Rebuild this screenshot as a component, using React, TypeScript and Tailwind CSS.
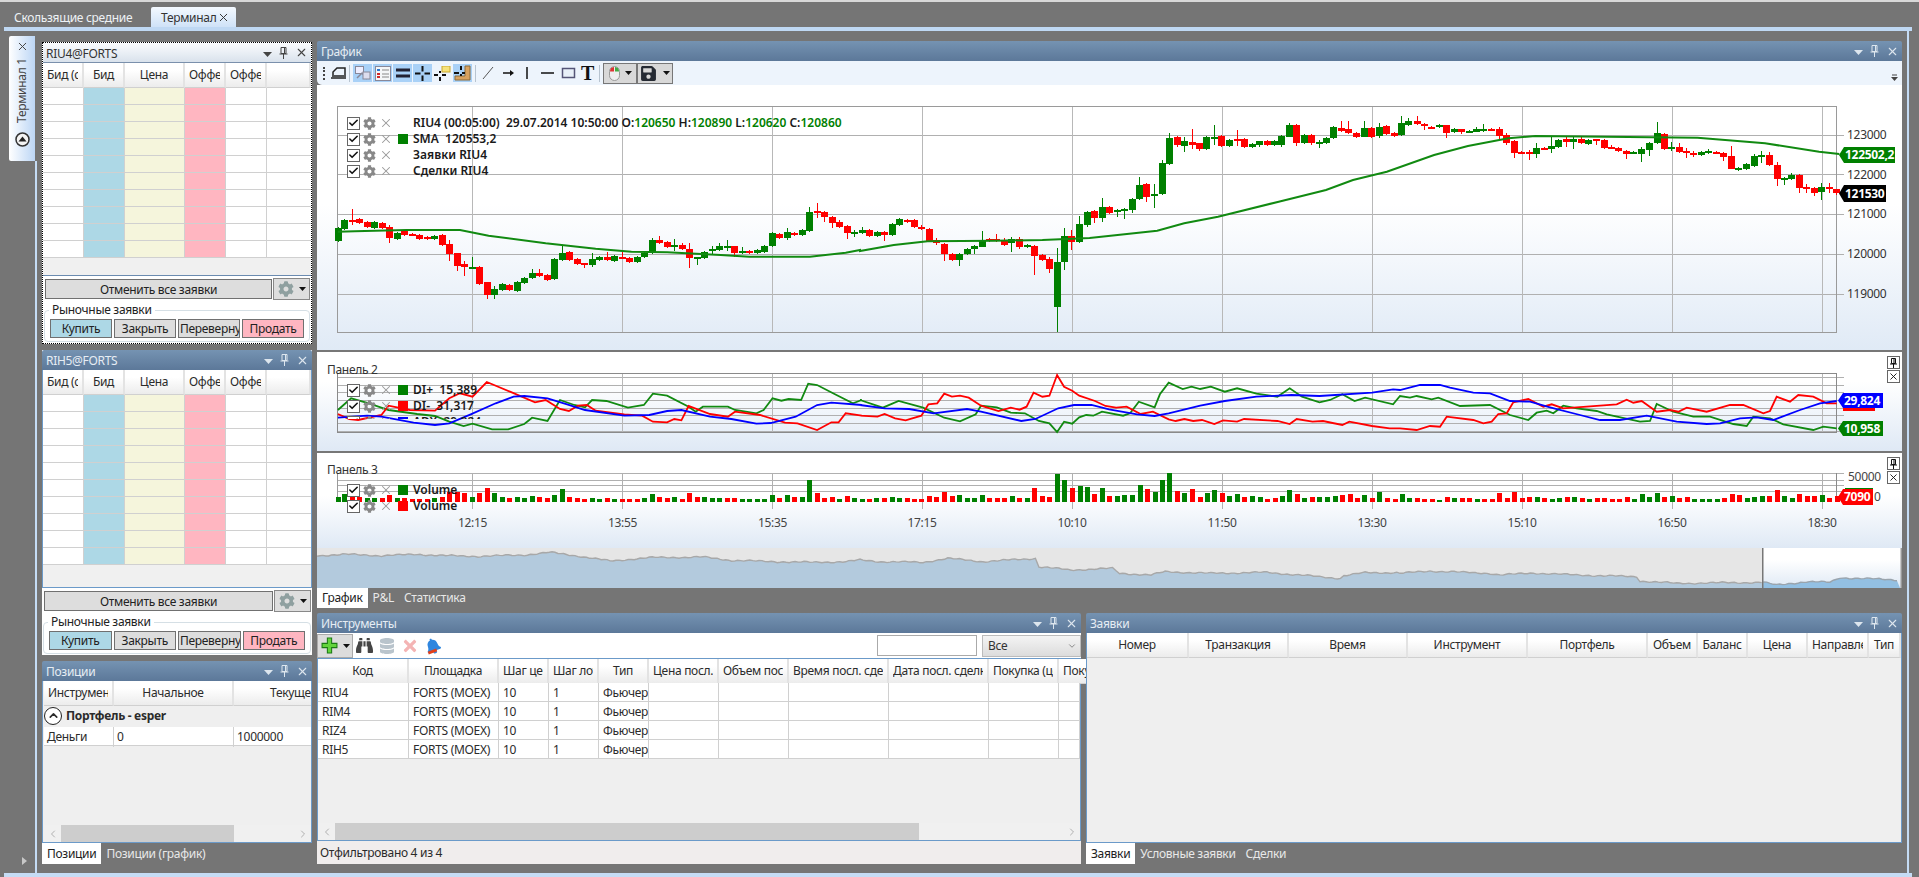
import type { ReactNode } from "react";
import { Check, ChevronLeft, ChevronRight, ChevronDown, ChevronUp, X } from "lucide-react";
import { FaBell, FaBinoculars, FaCog, FaDatabase, FaSave, FaTimes } from "react-icons/fa";

const GREEN = "#008000";
const RED = "#ff0000";
const BLUE = "#0000ff";

type Candle = [number, number, number, "g" | "r", number?, number?];
type Pt = [number, number];

// candles read off the reference: [x, bodyTop, bodyBottom, colour, wickTop, wickBottom]
const candlesLeft: Candle[] = [
  [78, 595, 632, "g"], [96, 570, 597, "g"], [118, 570, 572, "r", 537, 585], [138, 568, 580, "r"], [160, 576, 592, "r"],
  [180, 577, 594, "g"], [202, 580, 595, "r"], [222, 592, 623, "r", 585, 638], [244, 610, 627, "g"], [264, 602, 615, "r"],
  [286, 612, 614, "r"], [306, 616, 627, "r"], [328, 622, 626, "r"], [348, 618, 626, "g"], [370, 615, 645, "r"],
  [390, 642, 671, "r", 630, 692], [412, 670, 708, "r", 668, 722], [432, 702, 712, "r", 693, 738], [454, 712, 716, "g", 680, 718], [474, 711, 762, "r"],
  [496, 757, 795, "r", 755, 806], [516, 778, 795, "g", 768, 806], [538, 762, 780, "g"], [558, 765, 780, "r"], [580, 757, 782, "g"],
  [600, 745, 758, "g"], [622, 730, 744, "g", 716, 746], [642, 730, 738, "r", 716, 740], [664, 736, 750, "r"], [684, 688, 747, "g"],
  [706, 670, 690, "g", 647, 692], [726, 666, 690, "r"], [748, 688, 702, "r"], [768, 700, 702, "r", 700, 715], [790, 688, 705, "g", 670, 712],
  [810, 682, 690, "g"], [832, 682, 690, "r", 666, 692], [852, 679, 692, "g"], [874, 680, 686, "r", 666, 688], [894, 685, 696, "r"],
  [916, 680, 695, "g"], [936, 668, 680, "g"], [958, 630, 668, "g", 625, 672], [978, 630, 638, "r", 618, 642], [1000, 636, 650, "r"],
  [1020, 646, 651, "g", 628, 662], [1042, 646, 656, "r", 640, 660], [1062, 656, 683, "r", 640, 713], [1084, 681, 683, "g", 680, 705], [1104, 665, 683, "g"],
  [1126, 656, 662, "g", 648, 675], [1146, 648, 660, "g", 638, 664], [1168, 648, 650, "g", 630, 662], [1188, 649, 668, "r", 648, 682], [1210, 663, 668, "g", 652, 672],
  [1230, 663, 668, "r"], [1252, 661, 668, "g"], [1272, 647, 665, "g"], [1294, 610, 648, "g"], [1314, 613, 624, "r"],
  [1336, 607, 624, "g", 594, 630], [1356, 608, 616, "r"], [1378, 600, 615, "g"], [1398, 546, 603, "g", 532, 605], [1420, 544, 548, "r", 519, 563],
  [1440, 546, 562, "r", 544, 575], [1462, 562, 578, "r", 558, 594], [1482, 575, 590, "r", 570, 593], [1504, 588, 608, "r", 586, 627], [1524, 606, 611, "g", 600, 620],
];

const candlesRight: Candle[] = [
  [3, 601, 608, "g", 590, 612], [14, 600, 618, "r"], [25, 607, 618, "g"], [36, 606, 615, "r", 604, 632], [47, 582, 615, "g"],
  [58, 567, 585, "g"], [69, 570, 575, "r"], [80, 570, 592, "r"], [91, 592, 598, "r", 584, 600], [102, 597, 634, "r"],
  [113, 630, 640, "r", 625, 645], [124, 642, 671, "r", 640, 692], [136, 671, 689, "r", 668, 692], [147, 671, 689, "g", 668, 708], [158, 657, 672, "g"],
  [169, 648, 658, "g", 645, 672], [180, 630, 650, "g", 603, 652], [191, 628, 632, "r"], [202, 628, 634, "r", 612, 636], [213, 630, 645, "r", 625, 648],
  [224, 628, 640, "g", 622, 665], [235, 628, 652, "r", 622, 658], [247, 645, 650, "g"], [258, 648, 678, "r", 645, 735], [269, 676, 690, "r"],
  [280, 686, 718, "r", 680, 728], [291, 697, 830, "g", 655, 907], [302, 619, 697, "g", 595, 720], [313, 619, 635, "r", 600, 660], [324, 582, 635, "g", 558, 638],
  [336, 545, 585, "g", 543, 590], [347, 543, 565, "r", 540, 580], [358, 532, 563, "g", 504, 575], [369, 532, 548, "r"], [380, 540, 544, "g", 538, 560],
  [391, 537, 541, "g", 535, 566], [402, 507, 540, "g", 505, 548], [413, 465, 508, "g", 442, 510], [424, 463, 500, "r", 460, 515], [436, 492, 497, "g", 462, 533],
  [447, 400, 492, "g", 390, 495], [458, 324, 402, "g", 310, 404], [469, 321, 345, "r", 318, 350], [480, 334, 348, "g", 322, 365], [491, 337, 344, "r", 297, 358],
  [502, 340, 358, "r", 338, 362], [513, 321, 356, "g"], [524, 321, 326, "g", 285, 345], [535, 318, 348, "r"], [547, 330, 348, "g", 326, 350],
  [558, 328, 333, "r", 300, 348], [569, 328, 350, "r"], [580, 343, 350, "g"], [591, 334, 345, "g", 332, 352], [602, 334, 345, "r"],
  [613, 334, 345, "g"], [624, 318, 345, "g", 316, 352], [635, 284, 320, "g", 278, 322], [646, 285, 340, "r", 283, 348], [657, 314, 340, "g"],
  [668, 316, 340, "r", 312, 346], [680, 335, 340, "g", 330, 355], [690, 323, 340, "g"], [701, 292, 325, "g", 288, 328], [712, 295, 302, "r", 273, 305],
  [723, 298, 310, "r", 273, 312], [735, 308, 320, "r"], [746, 295, 320, "g", 273, 322], [757, 295, 320, "r"], [768, 290, 318, "g", 278, 323],
  [779, 288, 312, "r"], [790, 308, 318, "r"], [801, 280, 316, "g", 258, 318], [812, 272, 284, "g", 265, 288], [824, 273, 282, "r", 258, 284],
  [835, 282, 288, "r", 278, 300], [846, 290, 293, "r"], [857, 286, 292, "g", 282, 294], [868, 286, 310, "r", 284, 323], [879, 298, 306, "g"],
  [890, 298, 305, "r", 296, 312], [901, 304, 306, "g"], [912, 298, 305, "g", 290, 307], [923, 297, 299, "g", 283, 306], [934, 296, 298, "r"],
  [946, 298, 318, "r", 292, 326], [957, 316, 340, "r", 310, 345], [968, 333, 368, "r", 331, 384], [979, 367, 369, "r"], [990, 367, 369, "r", 360, 390],
  [1001, 355, 372, "g", 338, 385], [1012, 354, 356, "r"], [1023, 348, 356, "g", 322, 370], [1034, 330, 350, "g"], [1045, 328, 335, "r", 322, 352],
  [1056, 326, 335, "g", 320, 356], [1067, 328, 340, "r", 322, 342], [1078, 330, 343, "g"], [1090, 328, 332, "r", 326, 345], [1101, 330, 354, "r"],
  [1112, 350, 356, "r", 346, 358], [1123, 354, 364, "r"], [1134, 363, 372, "r", 360, 386], [1145, 366, 370, "g"], [1157, 356, 372, "g", 352, 395],
  [1168, 338, 360, "g", 335, 378], [1180, 310, 340, "g", 276, 342], [1190, 313, 356, "r", 310, 360], [1201, 350, 356, "g", 335, 362], [1212, 352, 366, "r", 338, 368],
  [1223, 364, 366, "r", 355, 384], [1234, 368, 370, "r", 362, 380], [1245, 366, 375, "g", 362, 378], [1256, 362, 368, "g", 358, 372], [1267, 366, 370, "r"],
  [1278, 370, 380, "r", 366, 392], [1290, 378, 416, "r", 348, 418], [1300, 415, 418, "g", 412, 423], [1312, 402, 416, "g", 400, 420], [1323, 378, 408, "g", 372, 412],
  [1334, 374, 378, "g", 364, 398], [1346, 375, 405, "r", 365, 408], [1357, 405, 446, "r", 395, 467], [1368, 444, 450, "g", 440, 464], [1379, 434, 446, "g", 430, 450],
  [1390, 434, 474, "r", 432, 488], [1401, 472, 478, "r", 462, 490], [1412, 475, 488, "r", 472, 498], [1423, 472, 485, "g", 460, 510], [1434, 472, 478, "r", 460, 490],
  [1445, 478, 490, "r", 476, 494],
];

const smaLeft: Pt[] = [[78, 605], [125, 604], [270, 600], [420, 600], [500, 617], [660, 640], [800, 656], [900, 665], [1000, 667], [1150, 675], [1230, 680], [1400, 680], [1500, 668], [1540, 660]];
const smaRight: Pt[] = [[0, 663], [50, 645], [100, 634], [200, 632], [270, 630], [340, 624], [440, 602], [480, 580], [530, 560], [620, 515], [690, 480], [730, 450], [780, 425], [850, 375], [900, 348], [960, 325], [1000, 318], [1240, 323], [1340, 340], [1420, 365], [1450, 372]];

const diGreen = [
  [[78, 195], [115, 160], [165, 175], [220, 195], [300, 207], [350, 213], [390, 230], [430, 243], [455, 236], [510, 253], [555, 253], [600, 237], [622, 218], [665, 228], [700, 165], [740, 180], [770, 187], [790, 165], [830, 168], [890, 188], [935, 180], [960, 146], [1000, 152], [1060, 185], [1080, 200], [1100, 185], [1170, 185], [1190, 195], [1250, 205], [1270, 195], [1295, 160], [1320, 167], [1340, 162], [1375, 165], [1395, 116], [1420, 120], [1470, 148], [1520, 175], [1545, 165]],
  [[0, 165], [65, 188], [110, 168], [180, 188], [240, 218], [285, 229], [330, 208], [345, 182], [390, 187], [430, 203], [470, 205], [510, 228], [540, 235], [562, 261], [582, 230], [605, 236], [625, 217], [645, 210], [665, 212], [690, 200], [750, 212], [770, 205], [795, 170], [840, 187], [855, 148], [880, 113], [920, 132], [945, 125], [970, 132], [1000, 125], [1040, 140], [1075, 130], [1130, 146], [1190, 155], [1225, 130], [1260, 155], [1310, 172], [1340, 165], [1375, 148], [1410, 168], [1440, 158], [1520, 178]],
  [[0, 153], [30, 158], [50, 153], [95, 163], [115, 158], [180, 183], [270, 180], [330, 210], [385, 225], [410, 203], [440, 197], [460, 205], [490, 182], [530, 190], [590, 198], [620, 208], [720, 230], [750, 228], [770, 177], [820, 200], [880, 215], [930, 215], [1000, 237], [1040, 243], [1060, 215], [1110, 220], [1150, 238], [1240, 255], [1270, 245], [1310, 250]],
] as Pt[][];

const diRed = [
  [[78, 207], [110, 222], [135, 225], [200, 210], [220, 182], [280, 195], [350, 197], [390, 160], [420, 145], [455, 155], [495, 111], [560, 140], [630, 172], [660, 165], [700, 192], [725, 198], [750, 182], [775, 180], [800, 197], [880, 208], [930, 212], [960, 230], [1000, 232], [1020, 222], [1040, 226], [1060, 183], [1120, 207], [1170, 215], [1190, 200], [1260, 210], [1330, 233], [1365, 235], [1420, 255], [1460, 232], [1480, 232], [1500, 205], [1545, 212]],
  [[0, 212], [50, 215], [70, 207], [100, 220], [130, 226], [175, 212], [195, 178], [220, 175], [240, 146], [262, 155], [285, 152], [310, 158], [345, 182], [395, 198], [430, 188], [455, 194], [475, 185], [495, 143], [520, 155], [540, 152], [562, 90], [582, 125], [605, 137], [625, 152], [670, 168], [700, 183], [730, 188], [760, 185], [800, 207], [835, 200], [880, 223], [900, 228], [925, 222], [950, 228], [975, 225], [1010, 237], [1035, 226], [1075, 230], [1095, 222], [1190, 228], [1225, 237], [1245, 222], [1290, 230], [1320, 228], [1375, 240], [1395, 230], [1460, 243], [1510, 250]],
  [[0, 250], [50, 255], [90, 243], [120, 245], [140, 215], [220, 225], [250, 235], [275, 230], [295, 207], [320, 205], [340, 172], [385, 162], [430, 185], [455, 178], [490, 190], [560, 185], [650, 178], [680, 164], [700, 173], [725, 168], [770, 200], [810, 195], [835, 200], [860, 188], [920, 200], [990, 180], [1030, 180], [1090, 205], [1110, 198], [1130, 155], [1170, 170], [1195, 150], [1240, 155], [1280, 175], [1310, 175]],
] as Pt[][];

const diBlue = [
  [[78, 218], [160, 212], [200, 215], [290, 233], [350, 240], [390, 235], [450, 208], [520, 175], [570, 155], [600, 153], [665, 160], [720, 178], [770, 195], [880, 212], [950, 210], [1000, 198], [1040, 195], [1120, 215], [1180, 222], [1250, 236], [1290, 234], [1360, 215], [1420, 180], [1460, 173], [1545, 180]],
  [[0, 180], [70, 190], [140, 192], [210, 205], [305, 192], [345, 200], [460, 228], [500, 222], [565, 190], [610, 180], [660, 180], [710, 193], [790, 208], [840, 213], [880, 205], [970, 182], [1040, 168], [1130, 155], [1230, 150], [1310, 153], [1460, 143], [1520, 133]],
  [[0, 135], [60, 120], [120, 120], [150, 128], [220, 143], [270, 145], [330, 168], [390, 170], [450, 187], [540, 210], [600, 225], [660, 225], [740, 212], [830, 230], [920, 237], [960, 235], [1020, 220], [1070, 217], [1120, 225], [1200, 195], [1260, 175], [1310, 168]],
] as Pt[][];

type Bar = [number, number, "g" | "r"];
const volA: Bar[] = [
  [78, 455, "g"], [96, 447, "g"], [118, 455, "r"], [138, 456, "r"], [160, 460, "g"], [180, 460, "g"], [202, 460, "r"], [222, 450, "r"], [244, 458, "g"], [264, 458, "r"], [286, 462, "r"], [306, 462, "r"], [328, 462, "r"], [348, 460, "g"], [370, 455, "r"], [390, 440, "r"], [412, 440, "r"], [432, 445, "r"], [454, 456, "g"], [474, 445, "r"], [496, 430, "r"], [516, 445, "g"], [538, 456, "g"], [558, 460, "r"], [580, 456, "g"], [600, 460, "g"], [622, 454, "g"], [642, 456, "r"], [664, 459, "r"], [684, 450, "g"], [706, 432, "g"], [726, 456, "r"], [748, 459, "r"], [768, 462, "r"], [790, 460, "g"], [810, 463, "g"], [832, 460, "r"], [852, 463, "g"], [874, 462, "r"], [894, 462, "r"], [916, 462, "r"], [936, 460, "g"], [958, 448, "g"], [978, 456, "r"], [1000, 459, "r"], [1020, 456, "g"], [1042, 462, "r"], [1062, 445, "r"], [1084, 456, "r"], [1104, 456, "g"], [1126, 460, "g"], [1146, 460, "g"], [1168, 460, "r"], [1188, 460, "r"], [1210, 463, "g"], [1230, 463, "g"], [1252, 463, "g"], [1272, 463, "g"], [1294, 450, "g"], [1314, 459, "r"], [1336, 450, "g"], [1356, 456, "r"], [1378, 456, "g"], [1398, 405, "g"], [1420, 444, "r"], [1440, 460, "r"], [1462, 456, "r"], [1482, 462, "g"], [1504, 454, "r"], [1524, 460, "g"], [1546, 463, "g"], [1566, 462, "r"],
];
const volB: Bar[] = [
  [47, 460, "g"], [68, 460, "r"], [90, 456, "g"], [112, 460, "g"], [133, 460, "r"], [155, 463, "r"], [175, 463, "r"], [197, 454, "r"], [218, 456, "r"], [240, 441, "r"], [261, 454, "r"], [283, 450, "g"], [304, 460, "g"], [326, 460, "g"], [347, 450, "g"], [368, 460, "r"], [390, 460, "r"], [411, 460, "r"], [433, 454, "g"], [454, 460, "r"], [476, 460, "g"], [497, 430, "r"], [518, 454, "r"], [540, 456, "r"], [561, 387, "g"], [583, 406, "g"], [604, 430, "r"], [626, 424, "g"], [647, 427, "g"], [668, 448, "r"], [690, 430, "g"], [711, 454, "r"], [732, 454, "g"], [754, 450, "g"], [775, 450, "g"], [797, 420, "g"], [818, 432, "r"], [840, 441, "g"], [860, 406, "g"], [882, 385, "g"], [904, 439, "r"], [925, 444, "g"], [946, 432, "r"], [968, 456, "r"], [989, 444, "g"], [1010, 436, "g"], [1032, 444, "r"], [1053, 454, "g"], [1074, 447, "g"], [1096, 456, "r"], [1117, 454, "g"], [1139, 456, "g"], [1160, 463, "r"], [1182, 460, "r"], [1203, 454, "g"], [1224, 436, "g"], [1246, 447, "r"], [1267, 460, "g"], [1288, 456, "r"], [1310, 456, "g"], [1331, 456, "g"], [1353, 454, "g"], [1374, 450, "r"], [1396, 447, "r"], [1417, 460, "r"], [1438, 450, "g"], [1460, 460, "r"], [1481, 441, "g"], [1502, 460, "r"], [1524, 463, "r"],
];
const volC: Bar[] = [
  [5, 448, "g"], [27, 460, "g"], [50, 460, "r"], [72, 463, "r"], [95, 463, "r"], [117, 466, "g"], [140, 456, "r"], [162, 460, "g"], [185, 460, "r"], [207, 460, "r"], [230, 463, "g"], [252, 463, "r"], [275, 463, "r"], [297, 444, "r"], [320, 460, "r"], [343, 440, "r"], [365, 460, "r"], [388, 456, "r"], [410, 456, "g"], [432, 460, "r"], [455, 463, "g"], [478, 460, "g"], [500, 456, "r"], [522, 456, "g"], [546, 460, "r"], [568, 463, "g"], [590, 460, "r"], [612, 460, "r"], [635, 463, "r"], [658, 463, "r"], [680, 456, "r"], [703, 463, "g"], [725, 448, "g"], [748, 456, "g"], [770, 444, "g"], [793, 456, "r"], [815, 454, "g"], [838, 460, "r"], [860, 456, "r"], [882, 463, "g"], [905, 463, "g"], [928, 463, "g"], [950, 463, "g"], [973, 460, "r"], [995, 447, "r"], [1018, 450, "r"], [1040, 460, "g"], [1062, 456, "g"], [1085, 454, "g"], [1108, 454, "r"], [1130, 436, "r"], [1153, 454, "g"], [1175, 460, "g"], [1198, 448, "r"], [1220, 454, "r"], [1243, 454, "r"], [1265, 450, "g"], [1288, 460, "r"], [1310, 454, "r"],
];

const navOutline: Pt[] = [
  ...([[20, 632], [100, 628], [200, 632], [300, 628], [380, 632], [470, 634], [600, 630], [670, 622], [750, 633], [840, 648], [950, 638], [1100, 636], [1180, 646], [1300, 650], [1400, 652], [1500, 650]] as Pt[]).map(([x, y]): Pt => [310 + x / 2.8, 345 + y / 3]),
  ...([[0, 645], [60, 650], [180, 652], [250, 640], [350, 650], [500, 640], [510, 665], [600, 675], [720, 670], [740, 685], [830, 690], [870, 680], [1000, 685], [1160, 682], [1250, 690], [1370, 700], [1380, 692], [1440, 683], [1530, 683]] as Pt[]).map(([x, y]): Pt => [860 + x / 2.851, 345 + y / 3]),
  ...([[0, 685], [90, 678], [190, 682], [270, 685], [300, 690], [400, 684], [530, 690], [710, 695], [720, 708], [830, 715], [1085, 712], [1090, 712], [1130, 720], [1220, 710], [1290, 712], [1320, 698], [1500, 705]] as Pt[]).map(([x, y]): Pt => [1400 + x / 3, 345 + y / 3]),
];

// the overview line is jagged in the picture, so break it up every few pixels
function roughen(points: Pt[]) {
  const out: Pt[] = [];
  let n = 0;
  for (let i = 0; i < points.length - 1; i++) {
    const [x0, y0] = points[i];
    const [x1, y1] = points[i + 1];
    const steps = Math.max(1, Math.round((x1 - x0) / 3));
    for (let s = 0; s < steps; s++) {
      n++;
      const t = s / steps;
      const noise = Math.sin(n * 1.7) * 0.5 + Math.sin(n * 0.37) * 0.5;
      out.push([x0 + (x1 - x0) * t, y0 + (y1 - y0) * t + noise]);
    }
  }
  return out;
}

const navPoints = roughen(navOutline);

const verticals = [472.5, 622.5, 772.5, 922, 1072, 1222, 1372, 1522, 1672, 1822];
const times = ["12:15", "13:55", "15:35", "17:15", "10:10", "11:50", "13:30", "15:10", "16:50", "18:30"];

const PLOT_L = 337.5;
const PLOT_R = 1836.5;

function poly(points: Pt[]) {
  return points.map(([x, y]) => `${x.toFixed(1)},${y.toFixed(1)}`).join(" ");
}

// the three crops of the indicator panes have different x scales
function diLine(parts: Pt[][]) {
  return [
    ...parts[0].map(([x, y]): Pt => [310 + x / 2.8, 345 + y / 3]),
    ...parts[1].map(([x, y]): Pt => [860 + x / 2.851, 345 + y / 3]),
    ...parts[2].map(([x, y]): Pt => [1400 + x / 3, 345 + y / 3]),
  ];
}

function CandleMark({ c, x }: { c: Candle; x: number }) {
  const [, top, bot, color, wickTop, wickBot] = c;
  const fill = color === "g" ? GREEN : RED;
  const t = 30 + top / 3;
  const b = 30 + bot / 3;
  const wt = 30 + (wickTop ?? top - 3) / 3;
  const wb = 30 + (wickBot ?? bot + 3) / 3;
  const cx = Math.round(x);
  return (
    <g fill={fill}>
      <rect x={cx} y={wt} width={1} height={wb - wt} />
      <rect x={cx - 3} y={t} width={7} height={Math.max(b - t, 2)} />
    </g>
  );
}

function PriceTag({ x, y, w, h, fill, text }: { x: number; y: number; w: number; h: number; fill: string; text: string }) {
  return (
    <g>
      <polygon points={`${x},${y + h / 2} ${x + 5},${y} ${x + w},${y} ${x + w},${y + h} ${x + 5},${y + h}`} fill={fill} />
      <text x={x + 6} y={y + h / 2 + 4} fill="#fff" fontSize={12} fontWeight={700}>
        {text}
      </text>
    </g>
  );
}

function MainChart() {
  const hLines = [135, 174.5, 214, 254, 294];
  const labels = ["123000", "122000", "121000", "120000", "119000"];
  const sma = [
    ...smaLeft.map(([x, y]): Pt => [310 + x / 2.8, 30 + y / 3]),
    ...smaRight.map(([x, y]): Pt => [860 + x * 0.6754, 30 + y / 3]),
  ];
  return (
    <svg viewBox="317 85 1585 265" className="absolute inset-0 h-full w-full">
      <g shapeRendering="crispEdges">
        {hLines.map((y) => (
          <line key={y} x1={PLOT_L} x2={1844} y1={y} y2={y} stroke="#b0b0b0" />
        ))}
        {verticals.map((x) => (
          <line key={x} x1={x} x2={x} y1={106} y2={332} stroke="#b8b8b8" />
        ))}
        <rect x={PLOT_L} y={106} width={PLOT_R - PLOT_L} height={226} fill="none" stroke="#9a9a9a" />
        {candlesLeft.map((c) => (
          <CandleMark key={c[0]} c={c} x={310 + c[0] / 2.8} />
        ))}
        {candlesRight.map((c) => (
          <CandleMark key={c[0]} c={c} x={860 + c[0] * 0.6754} />
        ))}
      </g>
      <polyline points={poly(sma)} fill="none" stroke="#118a11" strokeWidth={2} />
      {labels.map((t, i) => (
        <text key={t} x={1847} y={hLines[i] + 4} fontSize={12} fill="#333">
          {t}
        </text>
      ))}
      <PriceTag x={1839} y={147} w={56} h={16} fill={GREEN} text="122502,2" />
      <PriceTag x={1839} y={185} w={47} h={17} fill="#000" text="121530" />
    </svg>
  );
}

function DiChart() {
  const hLines = [377.3, 385, 392.7, 400.3, 408, 415.7, 423.3, 431];
  return (
    <svg viewBox="317 352 1585 99" className="absolute inset-0 h-full w-full">
      <g shapeRendering="crispEdges">
        {hLines.map((y) => (
          <line key={y} x1={PLOT_L} x2={1844} y1={y} y2={y} stroke="#b0b0b0" />
        ))}
        {verticals.map((x) => (
          <line key={x} x1={x} x2={x} y1={373} y2={432} stroke="#b8b8b8" />
        ))}
        <rect x={PLOT_L} y={373} width={PLOT_R - PLOT_L} height={59} fill="none" stroke="#8a8a8a" />
      </g>
      <text x={327} y={374} fontSize={12} fill="#333">
        Панель 2
      </text>
      <polyline points={poly(diLine(diGreen))} fill="none" stroke="#118a11" strokeWidth={1.8} />
      <polyline points={poly(diLine(diRed))} fill="none" stroke={RED} strokeWidth={1.8} />
      <polyline points={poly(diLine(diBlue))} fill="none" stroke={BLUE} strokeWidth={1.8} />
      <polygon points="1843,395 1875,395 1875,411 1843,411" fill={RED} />
      <PriceTag x={1838} y={393} w={45} h={15} fill={BLUE} text="29,824" />
      <PriceTag x={1838} y={421} w={45} h={15} fill={GREEN} text="10,958" />
    </svg>
  );
}

function VolumeChart() {
  const hLines = [473, 480, 485.7, 491.7];
  const bars = [
    ...volA.map(([x, y, c]): Bar => [310 + x / 2.8, y, c]),
    ...volB.map(([x, y, c]): Bar => [860 + x / 2.851, y, c]),
    ...volC.map(([x, y, c]): Bar => [1400 + x / 3, y, c]),
  ];
  return (
    <svg viewBox="317 453 1585 95" className="absolute inset-0 h-full w-full">
      <g shapeRendering="crispEdges">
        {hLines.map((y) => (
          <line key={y} x1={PLOT_L} x2={1844} y1={y} y2={y} stroke="#b0b0b0" />
        ))}
        <line x1={PLOT_L} x2={PLOT_L} y1={473} y2={502} stroke="#9a9a9a" />
        <line x1={PLOT_R} x2={PLOT_R} y1={473} y2={502} stroke="#8a8a8a" />
        {verticals.map((x) => (
          <line key={x} x1={x} x2={x} y1={473} y2={509} stroke="#b0b0b0" />
        ))}
        {bars.map(([x, y, c]) => (
          <rect key={x} x={Math.round(x) - 2} y={345 + y / 3} width={5} height={502 - (345 + y / 3)} fill={c === "g" ? GREEN : RED} />
        ))}
      </g>
      <text x={327} y={474} fontSize={12} fill="#333">
        Панель 3
      </text>
      {verticals.map((x, i) => (
        <text key={x} x={x} y={527} fontSize={12} fill="#444" textAnchor="middle">
          {times[i]}
        </text>
      ))}
      <text x={1848} y={481} fontSize={12} fill="#444">
        50000
      </text>
      <text x={1874} y={501} fontSize={12} fill="#444">
        0
      </text>
      <polygon points="1845,488 1873,488 1873,505 1845,505" fill={GREEN} />
      <PriceTag x={1838} y={489} w={35} h={16} fill={RED} text="7090" />
    </svg>
  );
}

function Navigator() {
  const split = navPoints.findIndex(([x]) => x >= 1763);
  const dim = navPoints.slice(0, split);
  const lit = navPoints.slice(split);
  return (
    <svg viewBox="317 548 1585 40" className="h-[40px] w-full">
      <defs>
        <linearGradient id="navWindow" x1="0" x2="0" y1="0" y2="1">
          <stop offset="0.3" stopColor="#ffffff" />
          <stop offset="1" stopColor="#dfe9f5" />
        </linearGradient>
      </defs>
      <rect x={317} y={548} width={1446} height={40} fill="#e6e6e6" />
      <rect x={1763} y={548} width={138} height={40} fill="url(#navWindow)" />
      <polygon points={`317,588 317,555 ${poly(dim)} 1763,588`} fill="#b3cadd" />
      <polyline points={poly(dim)} fill="none" stroke="#a8a8a8" strokeWidth={1.4} />
      <polygon points={`1763,588 ${poly(lit)} 1900,588`} fill="#93c0e3" />
      <polyline points={poly(lit)} fill="none" stroke="#9aa4ad" strokeWidth={1.4} />
      <rect x={1762} y={548} width={1.5} height={40} fill="#777" />
      <rect x={1900.5} y={548} width={1.5} height={40} fill="#999" />
    </svg>
  );
}

function PanelControls({ color }: { color: string }) {
  return (
    <div className="ml-auto flex items-center gap-[7px] pr-[3px]" style={{ color }}>
      <svg width="9" height="5" viewBox="0 0 9 5" className="mt-[3px]">
        <polygon points="0,0 9,0 4.5,5" fill="currentColor" />
      </svg>
      <svg width="9" height="12" viewBox="0 0 9 12">
        <path d="M2 .5h5v6H2zM5.5 1v5.500M.5 7h8M4.500 7v5" fill="none" stroke="currentColor" />
      </svg>
      <X size={13} strokeWidth={2} />
    </div>
  );
}

function PanelHeader({ title, active }: { title: string; active?: boolean }) {
  return (
    <div
      className={
        active
          ? "flex h-[20px] shrink-0 items-center border-b border-[#7a90ac] bg-linear-to-b from-[#fbfcfe] to-[#d9e2ec] pl-[3px] text-[#333]"
          : "flex h-[20px] shrink-0 items-center rounded-t-[2px] bg-linear-to-b from-[#7593b2] to-[#5c7899] pl-[4px] text-[#e6edf4]"
      }
    >
      <span className="pt-[2px]">{title}</span>
      <PanelControls color={active ? "#444" : "#dde6ee"} />
    </div>
  );
}

function DockTabs({ tabs }: { tabs: string[] }) {
  return (
    <div className="flex h-[21px] shrink-0 items-stretch">
      {tabs.map((tab, i) => (
        <div key={tab} className={i === 0 ? "flex items-center bg-white px-[5px] text-[#222]" : "flex items-center px-[5px] text-[#e8e8e8]"}>
          {tab}
        </div>
      ))}
    </div>
  );
}

function Scrollbar({ thumbLeft, thumbWidth }: { thumbLeft: string; thumbWidth: string }) {
  return (
    <div className="flex h-[17px] shrink-0 items-stretch bg-[#f0f0f0] text-[#b0b0b0]">
      <div className={thumbLeft + " flex items-center pl-[3px]"}>
        <ChevronLeft size={12} />
      </div>
      <div className={thumbWidth + " bg-[#cdcdcd]"} />
      <div className="ml-auto flex w-[17px] items-center justify-center">
        <ChevronRight size={12} />
      </div>
    </div>
  );
}

function HeaderCell({ children, className = "" }: { children?: ReactNode; className?: string }) {
  return (
    <div className={"border-r-2 border-b border-r-[#e3e3e3] border-b-[#d0d0d0] bg-linear-to-b from-white from-30% to-[#ececec] px-[4px] text-[#2b2b2b] " + className}>
      <div className="overflow-hidden whitespace-nowrap text-center leading-[24px]">{children}</div>
    </div>
  );
}

function GearButton() {
  return (
    <button className="flex h-[22px] w-[37px] items-center justify-center gap-[5px] border border-[#888] bg-[#dedede]">
      <FaCog size={16} className="text-[#8fa0a0]" />
      <svg width="7" height="4" viewBox="0 0 7 4">
        <polygon points="0,0 7,0 3.500,4" fill="#111" />
      </svg>
    </button>
  );
}

function DomPanel({ title, active }: { title: string; active?: boolean }) {
  const rows = Array.from({ length: 10 }, (_, i) => i);
  const cols = "grid grid-cols-[41px_41px_60px_41px_41px_1fr]";
  return (
    <section className={active ? "flex h-[302px] flex-col border border-dotted border-black bg-white" : "flex h-[305px] flex-col bg-white"}>
      <PanelHeader title={title} active={active} />
      <div className={active ? "flex flex-1 flex-col border-b border-[#6b8bb0] bg-[#f0f0f0]" : "flex flex-1 flex-col border border-t-0 border-[#6b9ac9] bg-[#f0f0f0]"}>
        <div className={cols}>
          <HeaderCell>Бид (с</HeaderCell>
          <HeaderCell>Бид</HeaderCell>
          <HeaderCell>Цена</HeaderCell>
          <HeaderCell>Оффер</HeaderCell>
          <HeaderCell>Оффер</HeaderCell>
          <HeaderCell />
        </div>
        {rows.map((r) => (
          <div key={r} className={cols + " h-[17px]"}>
            <div className="border-r border-b border-[#d0d0d0] bg-white" />
            <div className="border-r border-b border-[#d0d0d0] bg-[#add8e6]" />
            <div className="border-r border-b border-[#d0d0d0] bg-[#f5f5dc]" />
            <div className="border-r border-b border-[#d0d0d0] bg-[#ffb6c1]" />
            <div className="border-r border-b border-[#d0d0d0] bg-white" />
            <div className="border-b border-[#d0d0d0] bg-white" />
          </div>
        ))}
      </div>
      <div className="flex shrink-0 flex-col gap-[1px] px-[1px] pt-[2px] pb-[1px]">
        <div className="flex items-center gap-[1px]">
          <button className="ml-[1px] h-[20px] flex-1 border border-[#707070] bg-[#dddddd] pt-[1px] text-[#222]">Отменить все заявки</button>
          <GearButton />
        </div>
        <fieldset className="rounded-[4px] border border-[#d5dfe5] px-[5px] pb-[3px]">
          <legend className="-ml-[1px] px-[3px] leading-[18px] text-[#222]">Рыночные заявки</legend>
          <div className="grid grid-cols-4 gap-[2px]">
            <button className="h-[19px] border border-[#707070] bg-[#add8e6] pt-[1px] text-[#222]">Купить</button>
            <button className="h-[19px] border border-[#707070] bg-[#dddddd] pt-[1px] text-[#222]">Закрыть</button>
            <button className="h-[19px] overflow-hidden whitespace-nowrap border border-[#707070] bg-[#dddddd] pt-[1px] pl-[1px] text-left text-[#222]">Перевернуть</button>
            <button className="h-[19px] border border-[#707070] bg-[#ffb6c1] pt-[1px] text-[#222]">Продать</button>
          </div>
        </fieldset>
      </div>
    </section>
  );
}

function PositionsPanel() {
  const cols = "grid grid-cols-[70px_120px_1fr]";
  return (
    <section className="flex h-[203px] flex-col">
      <PanelHeader title="Позиции" />
      <div className="flex flex-1 flex-col overflow-hidden border border-t-0 border-[#6b9ac9] bg-[#efefef] pl-[1px] text-[#2b2b2b]">
        <div className={cols + " h-[23px] shrink-0"}>
          <HeaderCell>Инструмент</HeaderCell>
          <HeaderCell>Начальное</HeaderCell>
          <div className="overflow-hidden whitespace-nowrap border-b border-[#d0d0d0] bg-linear-to-b from-white from-30% to-[#ececec] pl-[36px] leading-[24px]">Текущее</div>
        </div>
        <div className="flex h-[23px] shrink-0 items-center gap-[4px] font-bold">
          <span className="flex h-[18px] w-[18px] items-center justify-center rounded-full border border-[#222] bg-white">
            <ChevronUp size={13} strokeWidth={3} />
          </span>
          <span className="pt-[1px]">Портфель - esper</span>
        </div>
        <div className={cols + " h-[19px] shrink-0 border-b border-[#d0d0d0] bg-white leading-[20px]"}>
          <div className="border-r border-[#d0d0d0] pl-[3px]">Деньги</div>
          <div className="border-r border-[#d0d0d0] pl-[3px]">0</div>
          <div className="pl-[3px]">1000000</div>
        </div>
        <div className="flex-1" />
        <Scrollbar thumbLeft="w-[17px]" thumbWidth="w-[173px]" />
      </div>
      <DockTabs tabs={["Позиции", "Позиции (график)"]} />
    </section>
  );
}

function LegendRow({ swatch, children }: { swatch?: string; children: ReactNode }) {
  return (
    <div className="flex h-[16px] items-center whitespace-nowrap tracking-normal">
      <span className="flex h-[13px] w-[13px] items-center justify-center border border-[#666] bg-white">
        <Check size={12} strokeWidth={3.5} className="text-[#111]" />
      </span>
      <FaCog size={13} className="ml-[3px] text-[#888]" />
      <X size={14} strokeWidth={1.8} className="ml-[3px] text-[#999]" />
      <span className="ml-[5px] h-[10px] w-[10px]" style={{ background: swatch ?? "transparent" }} />
      <span className="ml-[5px] font-semibold text-[#1a1a1a]">{children}</span>
    </div>
  );
}

function PaneButtons() {
  return (
    <div className="absolute top-[4px] right-[2px] flex flex-col gap-[1px]">
      <span className="flex h-[13px] w-[13px] items-center justify-center border border-[#666] bg-white">
        <svg width="7" height="10" viewBox="0 0 7 10">
          <path d="M1.500.5h4v5h-4zM4 1v4M0 6h7M3.500 6v4" fill="none" stroke="#111" />
        </svg>
      </span>
      <span className="flex h-[13px] w-[13px] items-center justify-center border border-[#666] bg-white">
        <X size={11} strokeWidth={2} className="text-[#111]" />
      </span>
    </div>
  );
}

function ToolIcon({ active, children }: { active?: boolean; children: ReactNode }) {
  return <span className={active ? "flex h-[18px] w-[19px] items-center justify-center bg-[#a9d1f7]" : "flex h-[18px] w-[19px] items-center justify-center"}>{children}</span>;
}

function ChartToolbar() {
  return (
    <div className="flex h-[24px] shrink-0 items-center rounded-bl-[5px] bg-[#edf4fc] pl-[6px] text-[#111]">
      <span className="mr-[5px] h-[13px] w-[2px] border-l-2 border-dotted border-[#444]" />
      <svg width="18" height="14" viewBox="0 0 18 14">
        <path d="M3 9V6l4-4h8v7M1 12h15M2 10h14" fill="none" stroke="#222" strokeWidth="1.500" />
      </svg>
      <span className="mr-[3px] ml-[1px] h-[17px] w-px bg-[#b8c4d0]" />
      <div className="flex gap-[1px]">
        <ToolIcon active>
          <svg width="16" height="15" viewBox="0 0 16 15">
            <rect x=".5" y=".5" width="8" height="7" fill="#eef" stroke="#889" />
            <path d="M2 12l5-5 5 6" fill="none" stroke="#889" strokeWidth="1.500" />
            <rect x="8" y="6" width="7" height="7" fill="#dde" stroke="#889" />
          </svg>
        </ToolIcon>
        <ToolIcon active>
          <svg width="16" height="15" viewBox="0 0 16 15">
            <rect x=".5" y=".5" width="15" height="14" fill="#f4f6f8" stroke="#889" />
            <path d="M2 4h3" stroke="#2a78d0" strokeWidth="2" />
            <path d="M2 8h3M2 11h3" stroke="#d02a2a" strokeWidth="2" />
            <path d="M7 4h7M7 8h7M7 11h7" stroke="#888" />
          </svg>
        </ToolIcon>
        <ToolIcon active>
          <svg width="16" height="12" viewBox="0 0 16 12">
            <path d="M1 3h14M1 9h14" stroke="#223" strokeWidth="3" />
          </svg>
        </ToolIcon>
        <ToolIcon active>
          <svg width="15" height="15" viewBox="0 0 15 15">
            <path d="M0 7.500h5.500M9.500 7.500H15M7.500 0v5.500M7.500 9.500V15" stroke="#111" strokeWidth="2" />
          </svg>
        </ToolIcon>
        <ToolIcon>
          <svg width="17" height="15" viewBox="0 0 17 15">
            <rect x="8" y="0" width="8" height="6" fill="#f6e27a" stroke="#c8a830" />
            <path d="M0 9h4M8 9h4M6 5v2M6 11v4" stroke="#111" strokeWidth="2" />
          </svg>
        </ToolIcon>
        <ToolIcon active>
          <svg width="17" height="16" viewBox="0 0 17 16">
            <path d="M11 1h5v14H1v-4h10z" fill="#d9a25f" stroke="#8a6a3a" />
            <path d="M0 8h5M8 8h3M7 1v4M7 9v2" stroke="#111" strokeWidth="2" />
          </svg>
        </ToolIcon>
      </div>
      <span className="mr-[5px] ml-[3px] h-[17px] w-px bg-[#b8c4d0]" />
      <svg width="100" height="18" viewBox="0 0 100 18">
        <path d="M2 15L12 3" stroke="#555" />
        <path d="M22 9h8" stroke="#111" strokeWidth="1.500" />
        <polygon points="29,6 33,9 29,12" fill="#111" />
        <path d="M46 3v12M60 9h13" stroke="#111" strokeWidth="1.500" />
        <rect x="81.500" y="4.500" width="12" height="9" fill="#e8f0f8" stroke="#557" strokeWidth="1.500" />
      </svg>
      <span className="w-[14px] font-['Liberation_Serif',serif] text-[20px] leading-[18px] font-bold text-[#111]">T</span>
      <span className="mr-[3px] ml-[4px] h-[17px] w-px bg-[#b8c4d0]" />
      <div className="flex h-[21px] w-[34px] items-center justify-center gap-[5px] border border-[#777] bg-[#d8d8d8]">
        <svg width="11" height="15" viewBox="0 0 11 15">
          <rect x=".5" y=".5" width="10" height="14" rx="5" fill="#eee" stroke="#999" />
          <path d="M1 5.500a4.500 4.500 0 0 1 4-4.500v4.500z" fill="#d33" />
          <path d="M6 1a4.500 4.500 0 0 1 4 4.500H6z" fill="#4a4" />
        </svg>
        <svg width="7" height="4" viewBox="0 0 7 4">
          <polygon points="0,0 7,0 3.500,4" fill="#111" />
        </svg>
      </div>
      <div className="flex h-[21px] w-[36px] items-center justify-center gap-[6px] border border-[#777] bg-[#d8d8d8]">
        <FaSave size={17} className="text-[#252a33]" />
        <svg width="7" height="4" viewBox="0 0 7 4">
          <polygon points="0,0 7,0 3.500,4" fill="#111" />
        </svg>
      </div>
      <svg width="7" height="8" viewBox="0 0 7 8" className="mt-[10px] mr-[4px] ml-auto">
        <path d="M1 1h5" stroke="#444" />
        <polygon points="0,3 7,3 3.500,7" fill="#444" />
      </svg>
    </div>
  );
}

function ChartPanel() {
  return (
    <section className="flex h-[567px] flex-col">
      <PanelHeader title="График" />
      <ChartToolbar />
      <div className="relative h-[265px] shrink-0 bg-linear-to-b from-white from-45% to-[#e0eaf6]">
        <MainChart />
        <div className="absolute top-[30px] left-[30px]">
          <LegendRow>
            RIU4 (00:05:00)&nbsp; 29.07.2014 10:50:00 O:<span className="text-[#008000]">120650</span> H:<span className="text-[#008000]">120890</span> L:<span className="text-[#008000]">120620</span> C:<span className="text-[#008000]">120860</span>
          </LegendRow>
          <LegendRow swatch={GREEN}>SMA&nbsp; 120553,2</LegendRow>
          <LegendRow>Заявки RIU4</LegendRow>
          <LegendRow>Сделки RIU4</LegendRow>
        </div>
      </div>
      <div className="h-[2px] shrink-0 bg-[#777]" />
      <div className="relative h-[99px] shrink-0 bg-linear-to-b from-white from-30% to-[#dfe9f5]">
        <DiChart />
        <div className="absolute top-[30px] left-[30px] h-[37px] overflow-hidden">
          <LegendRow swatch={GREEN}>DI+&nbsp; 15,389</LegendRow>
          <LegendRow swatch={RED}>DI-&nbsp; 31,317</LegendRow>
          <LegendRow swatch={BLUE}>ADX&nbsp; 29,824</LegendRow>
        </div>
        <PaneButtons />
      </div>
      <div className="h-[2px] shrink-0 bg-[#777]" />
      <div className="relative h-[95px] shrink-0 bg-linear-to-b from-white from-45% to-[#dfe9f5]">
        <VolumeChart />
        <div className="absolute top-[29px] left-[30px]">
          <LegendRow swatch={GREEN}>Volume</LegendRow>
          <LegendRow swatch={RED}>Volume</LegendRow>
        </div>
        <PaneButtons />
      </div>
      <Navigator />
      <div className="flex h-[20px] shrink-0 items-stretch">
        <div className="flex items-center bg-white px-[5px] text-[#222]">График</div>
        <div className="flex items-center px-[5px] text-[#e8e8e8]">P&amp;L</div>
        <div className="flex items-center px-[5px] text-[#e8e8e8]">Статистика</div>
      </div>
    </section>
  );
}

const securityCols = "grid grid-cols-[91px_90px_50px_50px_50px_70px_70px_100px_100px_70px_1fr]";
const securityHeads = ["Код", "Площадка", "Шаг цены", "Шаг лота", "Тип", "Цена посл.", "Объем посл.", "Время посл. сделки", "Дата посл. сделки", "Покупка (цена)", "Покупка"];
const securities = ["RIU4", "RIM4", "RIZ4", "RIH5"];

function SecuritiesPanel() {
  return (
    <section className="flex h-[251px] w-[764px] shrink-0 flex-col">
      <PanelHeader title="Инструменты" />
      <div className="flex h-[25px] shrink-0 items-center bg-white">
        <div className="flex h-[24px] w-[36px] items-center justify-center gap-[5px] border border-[#aaa] bg-[#dcdcdc]">
          <svg width="17" height="17" viewBox="0 0 16 16">
            <path d="M6 1h4v5h5v4h-5v5H6v-5H1V6h5z" fill="#63d43c" stroke="#1c7a14" />
          </svg>
          <svg width="7" height="4" viewBox="0 0 7 4">
            <polygon points="0,0 7,0 3.500,4" fill="#111" />
          </svg>
        </div>
        <FaBinoculars size={17} className="ml-[3px] text-[#444]" />
        <FaDatabase size={16} className="ml-[6px] text-[#b9c4cc]" />
        <FaTimes size={18} className="ml-[6px] text-[#f4b4b4]" />
        <span className="relative ml-[6px]">
          <FaBell size={16} className="-rotate-20 text-[#2f86df]" />
          <span className="absolute bottom-[1px] left-[3px] h-[3px] w-[9px] -rotate-20 bg-[#e0401c]" />
        </span>
        <input readOnly className="ml-auto h-[21px] w-[100px] border border-[#aaa] bg-white" />
        <div className="ml-[5px] flex h-[22px] w-[99px] items-center border border-[#bbb] bg-linear-to-b from-[#f4f4f4] to-[#dcdcdc] pr-[3px] pl-[5px] text-[#333]">
          Все
          <ChevronDown size={10} className="ml-auto text-[#777]" />
        </div>
      </div>
      <div className="flex flex-1 flex-col border border-[#6b9ac9] bg-[#efefef] text-[#2b2b2b]">
        <div className={securityCols + " h-[24px] shrink-0"}>
          {securityHeads.map((h) => (
            <HeaderCell key={h}>{h}</HeaderCell>
          ))}
        </div>
        {securities.map((code) => (
          <div key={code} className={securityCols + " h-[19px] shrink-0 bg-white leading-[20px]"}>
            {[code, "FORTS (MOEX)", "10", "1", "Фьючерс", "", "", "", "", "", ""].map((cell, i) => (
              <div key={i} className="overflow-hidden whitespace-nowrap border-r border-b border-[#d0d0d0] pl-[4px]">
                {cell}
              </div>
            ))}
          </div>
        ))}
        <div className="flex-1" />
        <Scrollbar thumbLeft="w-[17px]" thumbWidth="w-[584px]" />
      </div>
      <div className="flex h-[23px] shrink-0 items-center bg-[#f0eded] pl-[3px] text-[#2b2b2b]">Отфильтровано 4 из 4</div>
    </section>
  );
}

const orderCols = "grid grid-cols-[102px_100px_119px_120px_120px_50px_50px_60px_61px_1fr]";
const orderHeads = ["Номер", "Транзакция", "Время", "Инструмент", "Портфель", "Объем", "Баланс", "Цена", "Направление", "Тип"];

function OrdersPanel() {
  return (
    <section className="flex h-[251px] flex-1 flex-col">
      <PanelHeader title="Заявки" />
      <div className="flex-1 border border-t-0 border-[#6b9ac9] bg-[#efefef]">
        <div className={orderCols + " h-[23px]"}>
          {orderHeads.map((h) => (
            <HeaderCell key={h}>{h}</HeaderCell>
          ))}
        </div>
      </div>
      <DockTabs tabs={["Заявки", "Условные заявки", "Сделки"]} />
    </section>
  );
}

function WindowRail() {
  return (
    <div className="flex w-[37px] shrink-0 flex-col pt-[5px]">
      <div className="ml-[9px] flex h-[125px] w-[26px] shrink-0 flex-col items-center rounded-l-[2px] bg-linear-to-r from-white to-[#bcd6f5] pt-[4px] text-[#444]">
        <X size={13} strokeWidth={1.8} />
        <span className="mt-[6px] h-[64px] rotate-180 whitespace-nowrap [writing-mode:vertical-rl]">Терминал 1</span>
        <svg width="15" height="15" viewBox="0 0 15 15" className="mt-[9px]">
          <circle cx="7.500" cy="7.500" r="6.500" fill="#f4f4f4" stroke="#333" strokeWidth="1.500" />
          <polygon points="3.500,9.500 11.500,9.500 7.500,4.500" fill="#222" />
        </svg>
      </div>
      <div className="flex flex-1 items-end border-r-2 border-[#c5dcf5] pb-[8px] pl-[22px]">
        <svg width="5" height="8" viewBox="0 0 5 8">
          <polygon points="0,0 5,4 0,8" fill="#c8c8c8" />
        </svg>
      </div>
    </div>
  );
}

export default function App() {
  return (
    <div className="flex h-[877px] w-[1919px] flex-col overflow-hidden bg-[#757575] font-['Noto_Sans',sans-serif] text-[12px] leading-none tracking-[-0.3px]">
      <div className="h-[2px] shrink-0 bg-[#d8d8d8]" />
      <div className="flex h-[25px] shrink-0 items-stretch pt-[5px] pl-[14px]">
        <span className="flex w-[137px] items-center pt-[1px] text-[#eef2f6]">Скользящие средние</span>
        <div className="flex w-[85px] items-center justify-between rounded-t-[2px] bg-linear-to-b from-[#f4f9ff] to-[#cfe2f7] pr-[6px] pl-[10px] text-[#333]">
          <span className="pt-[1px]">Терминал</span>
          <X size={13} strokeWidth={1.8} />
        </div>
      </div>
      <div className="mr-[7px] ml-[4px] h-[4px] shrink-0 bg-[#bfd8f3]" />
      <div className="flex min-h-0 flex-1">
        <WindowRail />
        <div className="ml-[5px] flex w-[270px] shrink-0 flex-col gap-[6px] pt-[11px]">
          <DomPanel title="RIU4@FORTS" active />
          <DomPanel title="RIH5@FORTS" />
          <PositionsPanel />
        </div>
        <div className="ml-[5px] flex w-[1585px] shrink-0 flex-col gap-[5px] pt-[10px]">
          <ChartPanel />
          <div className="flex gap-[5px]">
            <SecuritiesPanel />
            <OrdersPanel />
          </div>
        </div>
        <div className="ml-[5px] w-[2px] shrink-0 bg-[#c5dcf5]" />
      </div>
      <div className="mr-[7px] ml-[4px] h-[4px] shrink-0 bg-[#c5dcf5]" />
    </div>
  );
}
